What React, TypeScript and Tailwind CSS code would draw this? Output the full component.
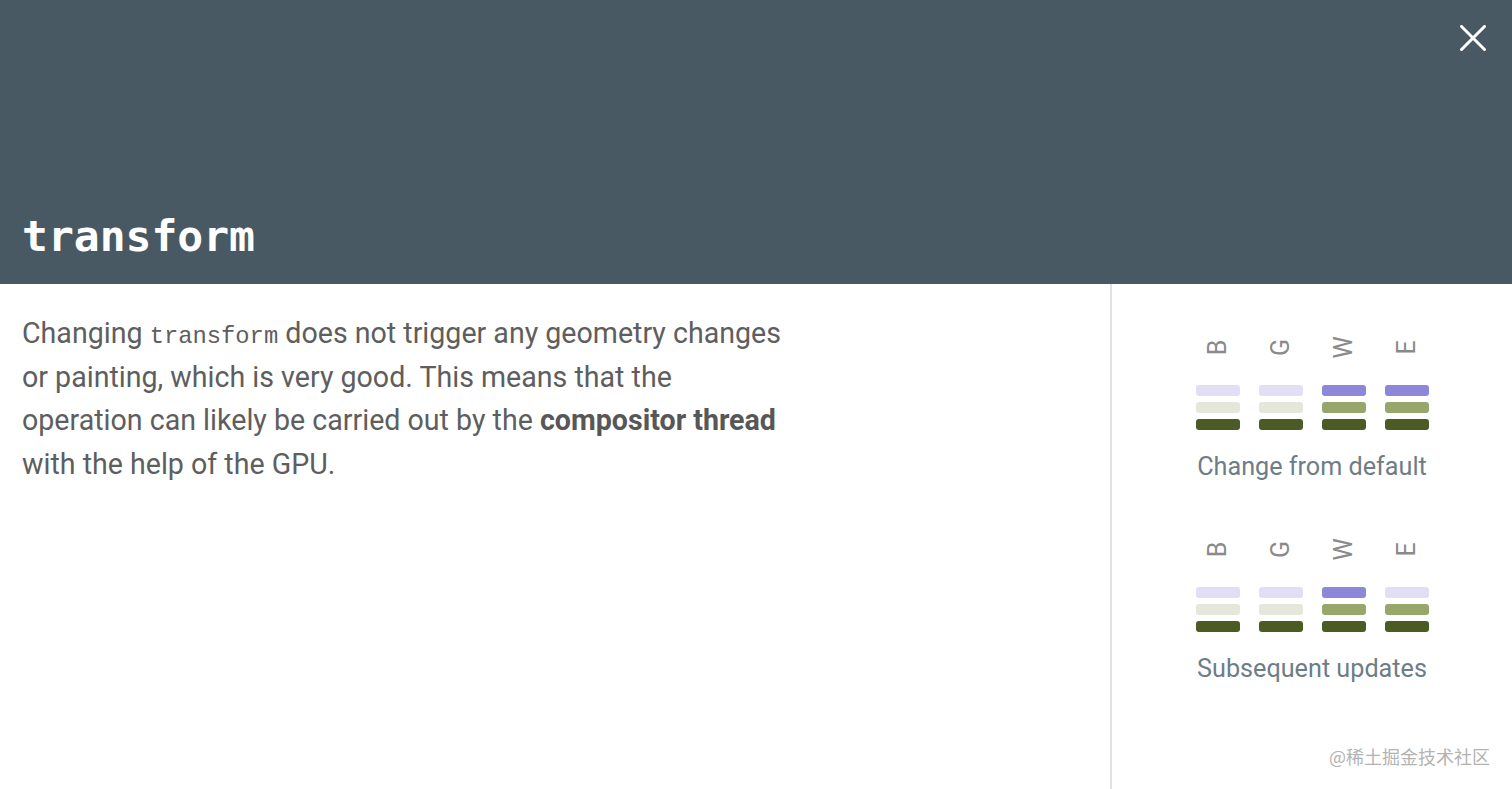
import React from "react";

const C = {
  lav: "bg-[#e1def6]",
  pur: "bg-[#8d87da]",
  lg: "bg-[#e4e7da]",
  og: "bg-[#97a76b]",
  dk: "bg-[#4b5b23]",
};

function Group({ cols, caption }: { cols: string[][]; caption: string }) {
  const letters = ["B", "G", "W", "E"];
  return (
    <div className="flex flex-col items-center">
      <div className="grid grid-cols-[44px_44px_44px_44px] gap-x-[19px]">
        {letters.map((l) => (
          <div key={l} className="h-[24px] flex items-center justify-center">
            <span className="-rotate-90 inline-block text-[25px] leading-none text-[#8a8a8a]" style={{ fontFamily: "Roboto, sans-serif" }}>
              {l}
            </span>
          </div>
        ))}
      </div>
      <div className="mt-[26px] grid grid-cols-[44px_44px_44px_44px] gap-x-[19px]">
        {cols.map((c, i) => (
          <div key={i} className="flex flex-col gap-[6px]">
            {c.map((cls, j) => (
              <div key={j} className={`h-[11px] rounded-[3px] ${cls}`} />
            ))}
          </div>
        ))}
      </div>
      <div className="mt-[21px] text-[25.2px] leading-[32px] text-[#6d7d88]" style={{ fontFamily: "Roboto, sans-serif" }}>
        {caption}
      </div>
    </div>
  );
}

export default function App() {
  return (
    <div className="relative w-full h-[789px] bg-white flex flex-col overflow-hidden" style={{ fontFamily: "Roboto, sans-serif" }}>
      <header className="relative h-[284px] bg-[#495964] flex items-end px-[22px] pb-[22px] shrink-0">
        <h1 className="text-white text-[43px] leading-[52px] font-bold" style={{ fontFamily: '"DejaVu Sans Mono", monospace' }}>
          transform
        </h1>
        <button className="absolute right-[26px] top-[25px] w-[26px] h-[26px]" aria-label="close">
          <svg viewBox="0 0 26 26" width="26" height="26">
            <path d="M1.5 1.5 L24.5 24.5 M24.5 1.5 L1.5 24.5" stroke="white" strokeWidth="3" strokeLinecap="square" />
          </svg>
        </button>
      </header>
      <div className="flex flex-1">
        <div className="flex-1 pl-[22px] pt-[28px]">
          <p className="w-[772px] text-[28.6px] leading-[43.5px] text-[#5e5e5e]">
            Changing{" "}
            <code
              className="text-[23.8px] leading-[0]"
              style={{ fontFamily: '"Courier New", "Nimbus Mono PS", "FreeMono", "Liberation Mono", monospace' }}
            >
              transform
            </code>{" "}
            does not trigger any geometry changes or painting, which is very good. This means that the operation can likely be carried out by the{" "}
            <strong className="font-bold text-[#575757]">compositor thread</strong> with the help of the GPU.
          </p>
        </div>
        <aside className="w-[402px] border-l-2 border-[#e2e2e2] flex flex-col items-center pt-[51px] gap-[54px]">
          <Group
            caption="Change from default"
            cols={[
              [C.lav, C.lg, C.dk],
              [C.lav, C.lg, C.dk],
              [C.pur, C.og, C.dk],
              [C.pur, C.og, C.dk],
            ]}
          />
          <Group
            caption="Subsequent updates"
            cols={[
              [C.lav, C.lg, C.dk],
              [C.lav, C.lg, C.dk],
              [C.pur, C.og, C.dk],
              [C.lav, C.og, C.dk],
            ]}
          />
        </aside>
      </div>
      <div className="absolute right-[22px] bottom-[22px] text-[18px] leading-[22px] text-[#b3b3b3]" style={{ fontFamily: '"Noto Sans CJK SC", sans-serif' }}>
        @稀土掘金技术社区
      </div>
    </div>
  );
}
